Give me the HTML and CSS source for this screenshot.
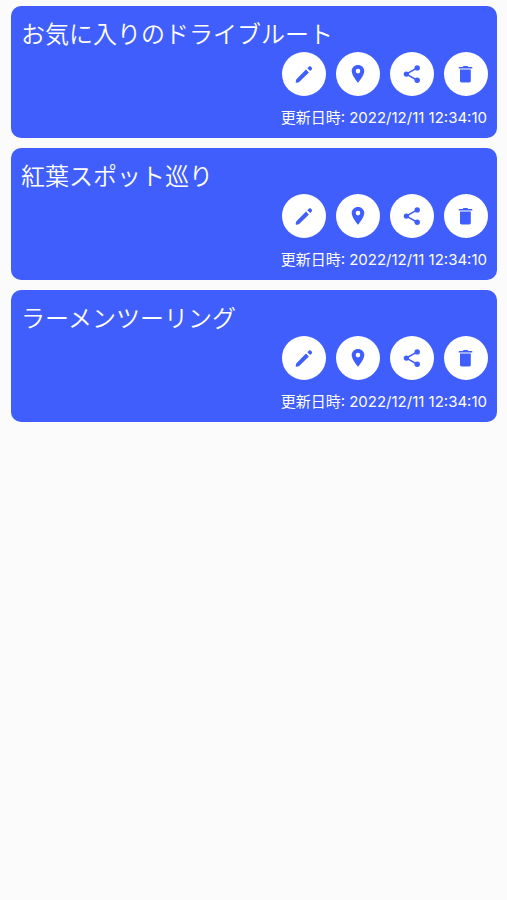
FILE: index.html
```html
<!DOCTYPE html>
<html lang="ja">
<head>
    <meta charset="UTF-8">
    <meta name="viewport" content="width=device-width, initial-scale=1.0">
    <title>ルート一覧</title>
    <link rel="stylesheet" href="styles.css">
</head>
<body>
    <svg class="sprite" aria-hidden="true">
        <symbol id="icon-edit" viewBox="0 0 28 28">
            <path d="M6.200 19.500L16 9.500l2.900 2.900L8.900 22.200l-2.400.6c-.5.100-.9-.3-.8-.8z"/>
            <path d="M17.300 8.200l1.500-1.500c.6-.6 1.500-.6 2.100 0l.8.8c.6.6.6 1.500 0 2.100l-1.500 1.500z"/>
        </symbol>
        <symbol id="icon-place" viewBox="0 0 28 28">
            <path d="M14 5c-3.500 0-6.300 2.700-6.300 6.100 0 4.600 6.300 11.700 6.300 11.700s6.300-7.100 6.300-11.700C20.300 7.700 17.500 5 14 5zm0 8.400a2.300 2.300 0 1 1 0-4.600 2.300 2.300 0 0 1 0 4.600z"/>
        </symbol>
        <symbol id="icon-share" viewBox="0 0 28 28">
            <path d="M19.200 7.900L8.400 14.100l10.800 6.200" fill="none" stroke="currentColor" stroke-width="1.600"/>
            <circle cx="8.400" cy="14.100" r="2.700"/>
            <circle cx="19.200" cy="7.900" r="2.700"/>
            <circle cx="19.200" cy="20.300" r="2.700"/>
        </symbol>
        <symbol id="icon-delete" viewBox="0 0 28 28">
            <path d="M7.300 7h3.400l.8-.9h4l.8.9h3.400c.4 0 .6.300.6.700v.9H6.700v-.9c0-.4.200-.7.600-.7z"/>
            <path d="M8 9.500h10.800v11.200c0 1-.8 1.700-1.700 1.700H9.700c-1 0-1.700-.7-1.700-1.700z"/>
        </symbol>
    </svg>

    <main class="route-list">
        <article class="card">
            <h2 class="card-title">お気に入りのドライブルート</h2>
            <div class="card-actions">
                <button type="button" class="icon-button" aria-label="編集"><svg class="icon"><use href="#icon-edit"/></svg></button>
                <button type="button" class="icon-button" aria-label="地図"><svg class="icon"><use href="#icon-place"/></svg></button>
                <button type="button" class="icon-button" aria-label="共有"><svg class="icon"><use href="#icon-share"/></svg></button>
                <button type="button" class="icon-button" aria-label="削除"><svg class="icon"><use href="#icon-delete"/></svg></button>
            </div>
            <p class="card-date">更新日時: 2022/12/11 12:34:10</p>
        </article>

        <article class="card">
            <h2 class="card-title">紅葉スポット巡り</h2>
            <div class="card-actions">
                <button type="button" class="icon-button" aria-label="編集"><svg class="icon"><use href="#icon-edit"/></svg></button>
                <button type="button" class="icon-button" aria-label="地図"><svg class="icon"><use href="#icon-place"/></svg></button>
                <button type="button" class="icon-button" aria-label="共有"><svg class="icon"><use href="#icon-share"/></svg></button>
                <button type="button" class="icon-button" aria-label="削除"><svg class="icon"><use href="#icon-delete"/></svg></button>
            </div>
            <p class="card-date">更新日時: 2022/12/11 12:34:10</p>
        </article>

        <article class="card">
            <h2 class="card-title">ラーメンツーリング</h2>
            <div class="card-actions">
                <button type="button" class="icon-button" aria-label="編集"><svg class="icon"><use href="#icon-edit"/></svg></button>
                <button type="button" class="icon-button" aria-label="地図"><svg class="icon"><use href="#icon-place"/></svg></button>
                <button type="button" class="icon-button" aria-label="共有"><svg class="icon"><use href="#icon-share"/></svg></button>
                <button type="button" class="icon-button" aria-label="削除"><svg class="icon"><use href="#icon-delete"/></svg></button>
            </div>
            <p class="card-date">更新日時: 2022/12/11 12:34:10</p>
        </article>
    </main>
</body>
</html>
```
FILE: styles.css
```css
body {
    margin: 0;
    background-color: #fbfbfb;
    font-family: Inter, "Noto Sans CJK JP", sans-serif;
}
.sprite {
    display: none;
}
.route-list {
    display: flex;
    flex-direction: column;
    gap: 10px;
    padding: 6px 10px 6px 11px;
}
.card {
    padding: 12px 9px 8px 10px;
    border-radius: 10px;
    background-color: #3f5efb;
    color: #fff;
}
.card-title {
    margin: 0;
    font-size: 24px;
    font-weight: 350;
    line-height: 34px;
}
.card-actions {
    display: flex;
    justify-content: flex-end;
    gap: 10px;
    margin-bottom: 10px;
}
.icon-button {
    display: flex;
    align-items: center;
    justify-content: center;
    width: 44px;
    height: 44px;
    padding: 0;
    border: none;
    border-radius: 50%;
    background-color: #fff;
    color: #3f5efb;
    cursor: pointer;
}
.icon {
    width: 28px;
    height: 28px;
    fill: currentColor;
}
.card-date {
    margin: 0;
    padding-right: 1px;
    font-size: 15px;
    line-height: 24px;
    text-align: right;
}
```
